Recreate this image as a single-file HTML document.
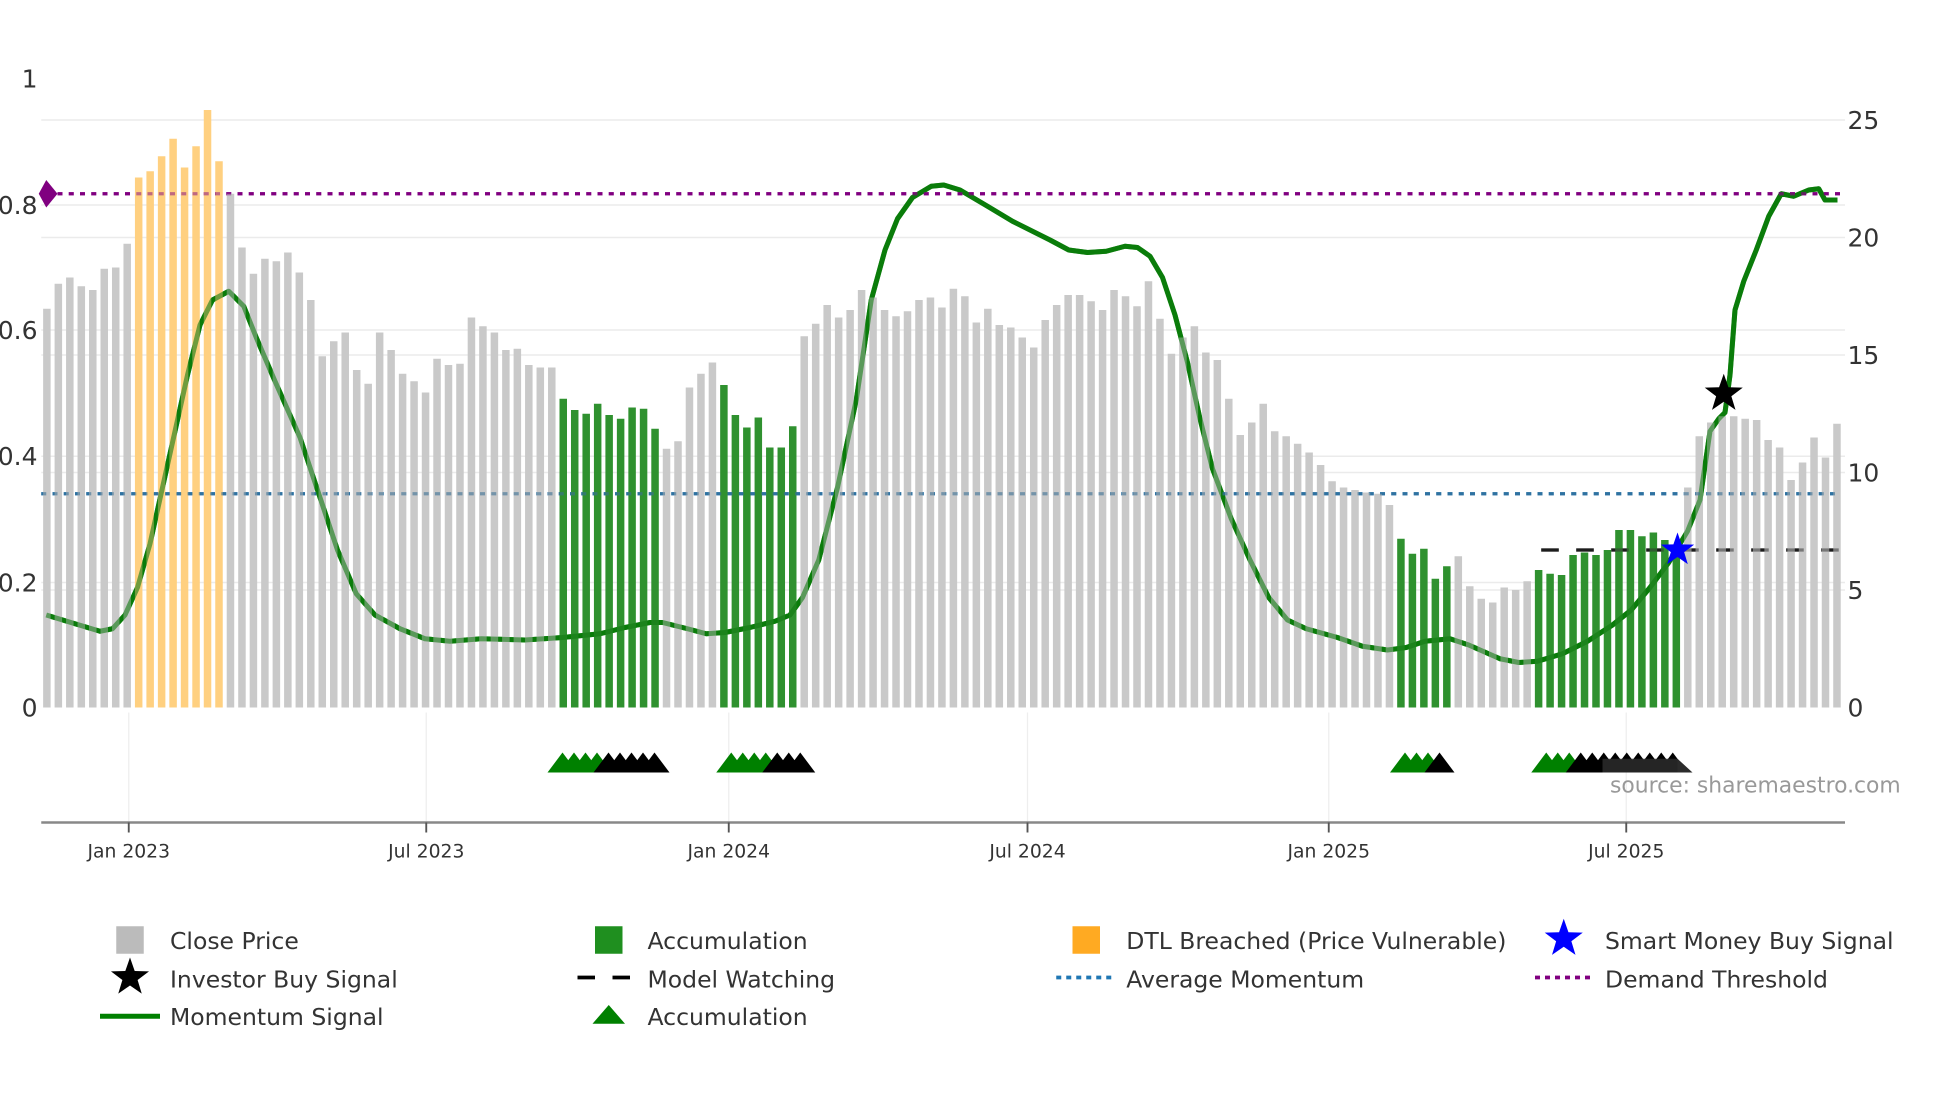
<!DOCTYPE html>
<html><head><meta charset="utf-8"><style>
html,body{margin:0;padding:0;background:#fff;width:1960px;height:1102px;overflow:hidden}
svg{display:block}
text{font-family:"DejaVu Sans","Liberation Sans",sans-serif;fill:#333}
</style></head><body>
<svg id="s" width="1960" height="1102" viewBox="0 0 1568 881.6" xmlns="http://www.w3.org/2000/svg"></svg>
<script>
const tops=[247,227,222,229,232,215,214,195,142,137,125,111,134,117,88,129,155,198,219,207,209,202,218,240,285,273,266,296,307,266,280,299,305,314,287,292,291,254,261,266,280,279,292,294,294,
319,328,331,323,332,335,326,327,343,359,353,310,299,290,308,332,342,334,358,358,341,
269,259,244,254,248,232,238,248,253,249,240,238,246,231,237,258,247,260,262,270,278,256,244,236,236,241,248,232,237,245,225,255,283,270,261,282,288,319,348,338,323,345,349,355,362,372,385,390,392,394,395,404,
431,443,439,463,453,445,469,479,482,470,472,465,456,459,460,444,442,444,440,424,424,429,426,432,437,
390,349,338,333,333,335,336,352,358,384,370,350,366,339];
function col(i){const n=i+1;if(n>=9&&n<=16)return'#ffd080';if((n>=46&&n<=54)||(n>=60&&n<=66)||(n>=119&&n<=123)||(n>=131&&n<=143))return'#2f912f';return'#c9c9c9';}
const mom=[[37,492],[60,499],[80,505],[90,503],[100,492],[110,470],[120,435],[130,390],[140,345],[150,300],[160,260],[170,240],[183,233],[195,245],[205,270],[220,305],[240,350],[255,395],[270,440],[285,475],[300,492],[320,503],[340,511],[360,513],[385,511],[420,512],[450,510],[480,507],[500,502],[520,498],[530,498],[550,503],[565,507],[580,506],[600,502],[620,497],[632,492],[642,478],[655,448],[670,390],[685,320],[697,240],[708,200],[718,175],[730,158],[745,149],[755,148],[768,152],[790,165],[810,177],[840,192],[855,200],[870,202],[885,201],[900,197],[910,198],[920,205],[930,222],[940,252],[950,290],[960,335],[970,375],[985,415],[1000,448],[1015,478],[1030,496],[1045,503],[1070,510],[1090,517],[1110,520],[1125,518],[1140,513],[1160,511],[1175,516],[1200,527],[1215,530],[1230,529],[1250,523],[1270,513],[1290,500],[1305,488],[1320,470],[1335,450],[1350,425],[1360,400],[1368,345],[1375,335],[1380,330],[1384,300],[1388,248],[1395,225],[1405,200],[1415,173],[1425,155],[1435,157],[1447,152],[1455,151],[1460,160],[1470,160]];
let h='';
[164,264,365,466,96,190,284,378,472].forEach(y=>h+=`<line x1="33" x2="1476" y1="${y}" y2="${y}" stroke="#ebebeb" stroke-width="1.2"/>`);
[103,341,583,822,1063,1301].forEach(x=>h+=`<line x1="${x}" x2="${x}" y1="570" y2="658" stroke="#eeeeee" stroke-width="1"/>`);
const mp='M'+mom.map(p=>p.join(',')).join(' L');
h+=`<path d="${mp}" fill="none" stroke="#008000" stroke-width="4" stroke-linejoin="round"/>`;
h+=`<line x1="37" x2="1472" y1="155" y2="155" stroke="#800080" stroke-width="2.6" stroke-dasharray="4,5"/>`;
h+=`<line x1="33" x2="1472" y1="395" y2="395" stroke="#1f77b4" stroke-width="2.6" stroke-dasharray="4,5"/>`;
h+=`<line x1="1233" x2="1472" y1="440" y2="440" stroke="#000" stroke-width="2.6" stroke-dasharray="14,14"/>`;
const step=9.18;
tops.forEach((t,i)=>{const c=37.5+i*step;h+=`<rect x="${(c-3).toFixed(2)}" y="${t}" width="6" height="${566-t}" fill="${col(i)}"/>`;});
h+=`<path d="${mp}" fill="none" stroke="#117a11" stroke-opacity="0.6" stroke-width="4" stroke-linejoin="round"/>`;
h+=`<line x1="37" x2="1472" y1="155" y2="155" stroke="#800080" stroke-opacity="0.5" stroke-width="2.6" stroke-dasharray="4,5"/>`;
h+=`<line x1="33" x2="1472" y1="395" y2="395" stroke="#3a6f95" stroke-opacity="0.6" stroke-width="2.6" stroke-dasharray="4,5"/>`;
h+=`<line x1="1233" x2="1472" y1="440" y2="440" stroke="#333" stroke-opacity="0.55" stroke-width="2.6" stroke-dasharray="14,14"/>`;
h+=`<path d="M37,144 L46,155 L37,166 L31,155 Z" fill="#800080"/>`;
function star(cx,cy,R,fill){let p=[];for(let k=0;k<10;k++){const r=k%2?R*0.4:R;const a=-Math.PI/2+k*Math.PI/5;p.push((cx+r*Math.cos(a)).toFixed(2)+','+(cy+r*Math.sin(a)).toFixed(2));}return `<polygon points="${p.join(' ')}" fill="${fill}"/>`;}
h+=star(1342,440,14,'#0000ff');
h+=star(1379,315,16,'#000');
function tris(x0,n,ng){let s='';for(let k=0;k<n;k++){const x=x0+k*9.2;const c=k<ng?'#008000':'#000';s+=`<polygon points="${x-12},618 ${x},602 ${x+12},618" fill="${c}"/>`;}return s;}
h+=tris(450,9,4);
h+=tris(585,7,4);
h+=tris(1124,4,3);
h+=tris(1237,12,3);
h+=`<rect x="1282" y="607" width="60" height="11" fill="#2b2b2b" opacity="0.85"/>`;
h+=`<polygon points="1342,607 1354,618 1342,618" fill="#2b2b2b"/>`;
h+=`<text x="1288" y="634" font-size="17.5" style="fill:#999">source: sharemaestro.com</text>`;
h+=`<line x1="33" x2="1476" y1="658" y2="658" stroke="#888" stroke-width="2"/>`;
[['Jan 2023',103],['Jul 2023',341],['Jan 2024',583],['Jul 2024',822],['Jan 2025',1063],['Jul 2025',1301]].forEach(([t,x])=>{h+=`<line x1="${x}" x2="${x}" y1="658" y2="666" stroke="#555" stroke-width="1.5"/><text x="${x}" y="686" font-size="15" text-anchor="middle">${t}</text>`;});
[['1',63],['0.8',164],['0.6',264],['0.4',365],['0.2',466],['0',566]].forEach(([t,y])=>h+=`<text x="30" y="${y+7}" font-size="20" text-anchor="end">${t}</text>`);
[['25',96],['20',190],['15',284],['10',378],['5',472],['0',566]].forEach(([t,y])=>h+=`<text x="1478" y="${y+7}" font-size="20">${t}</text>`);
const L=(x,y,t)=>h+=`<text x="${x}" y="${y+7}" font-size="18.8">${t}</text>`;
h+=`<rect x="93" y="741" width="22" height="22" fill="#bbbbbb"/>`;L(136,752,'Close Price');
h+=star(104,782,16,'#000');L(136,783,'Investor Buy Signal');
h+=`<line x1="80" x2="128" y1="813" y2="813" stroke="#008000" stroke-width="4"/>`;L(136,813,'Momentum Signal');
h+=`<rect x="476" y="741" width="22" height="22" fill="#1f8f1f"/>`;L(518,752,'Accumulation');
h+=`<line x1="462" x2="508" y1="782" y2="782" stroke="#000" stroke-width="3" stroke-dasharray="14,14"/>`;L(518,783,'Model Watching');
h+=`<polygon points="474,819 487,804 500,819" fill="#008000"/>`;L(518,813,'Accumulation');
h+=`<rect x="858" y="741" width="22" height="22" fill="#ffaa22"/>`;L(901,752,'DTL Breached (Price Vulnerable)');
h+=`<line x1="845" x2="891" y1="782" y2="782" stroke="#1f77b4" stroke-width="3" stroke-dasharray="4,4"/>`;L(901,783,'Average Momentum');
h+=star(1251,751,16,'#0000ff');L(1284,752,'Smart Money Buy Signal');
h+=`<line x1="1228" x2="1274" y1="782" y2="782" stroke="#800080" stroke-width="3" stroke-dasharray="4,4"/>`;L(1284,783,'Demand Threshold');
document.getElementById('s').innerHTML=h;
</script>
</body></html>
